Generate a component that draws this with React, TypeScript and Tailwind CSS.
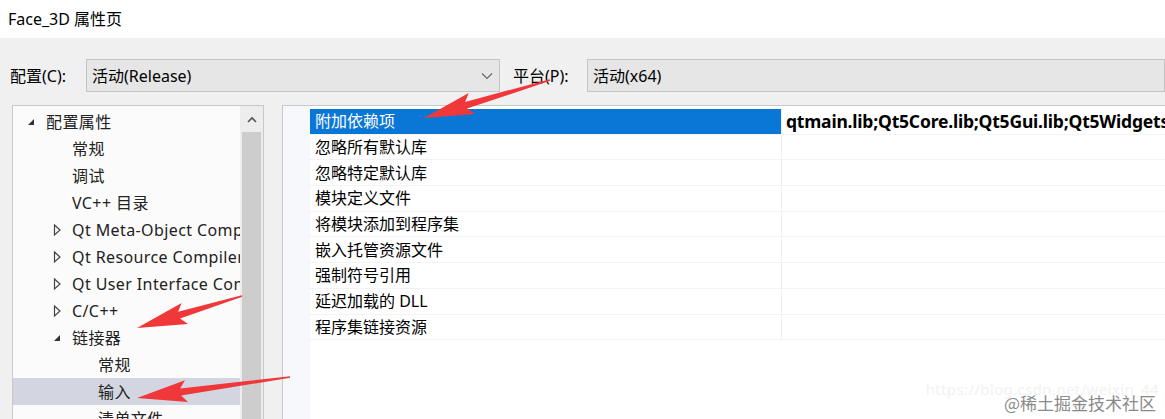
import React from 'react'

const font = { fontFamily: '"Noto Sans", "Noto Sans CJK SC", sans-serif' }

type TreeItem = { label: string; level: number; expander?: 'open' | 'closed'; selected?: boolean }

const tree: TreeItem[] = [
  { label: '配置属性', level: 0, expander: 'open' },
  { label: '常规', level: 1 },
  { label: '调试', level: 1 },
  { label: 'VC++ 目录', level: 1 },
  { label: 'Qt Meta-Object Compiler', level: 1, expander: 'closed' },
  { label: 'Qt Resource Compiler', level: 1, expander: 'closed' },
  { label: 'Qt User Interface Compiler', level: 1, expander: 'closed' },
  { label: 'C/C++', level: 1, expander: 'closed' },
  { label: '链接器', level: 1, expander: 'open' },
  { label: '常规', level: 2 },
  { label: '输入', level: 2, selected: true },
  { label: '清单文件', level: 2 },
]

const props = [
  '附加依赖项',
  '忽略所有默认库',
  '忽略特定默认库',
  '模块定义文件',
  '将模块添加到程序集',
  '嵌入托管资源文件',
  '强制符号引用',
  '延迟加载的 DLL',
  '程序集链接资源',
]

function Expander({ kind }: { kind?: 'open' | 'closed' }) {
  if (!kind) return <span className="w-[10px] shrink-0" />
  return kind === 'open' ? (
    <svg className="shrink-0" width="10" height="10" viewBox="0 0 10 10">
      <polygon points="8,2 8,8 2,8" fill="#333" />
    </svg>
  ) : (
    <svg className="shrink-0" width="10" height="14" viewBox="0 0 10 14">
      <polygon points="2.5,2 8,7 2.5,12" fill="none" stroke="#444" strokeWidth="1.2" />
    </svg>
  )
}

function arrow(x1: number, y1: number, x2: number, y2: number) {
  const dx = x2 - x1
  const dy = y2 - y1
  const len = Math.hypot(dx, dy)
  const ux = dx / len
  const uy = dy / len
  const nx = -uy
  const ny = ux
  const headLen = 44
  const bx = x2 - ux * headLen
  const by = y2 - uy * headLen
  const p = (x: number, y: number) => `${x.toFixed(1)},${y.toFixed(1)}`
  return [
    p(x1 + nx * 0.8, y1 + ny * 0.8),
    p(bx + nx * 3.5, by + ny * 3.5),
    p(bx - ux * 6 + nx * 11, by - uy * 6 + ny * 11),
    p(x2, y2),
    p(bx - ux * 6 - nx * 11, by - uy * 6 - ny * 11),
    p(bx - nx * 3.5, by - ny * 3.5),
    p(x1 - nx * 0.8, y1 - ny * 0.8),
  ].join(' ')
}

export default function App() {
  return (
    <div className="relative flex h-[419px] w-[1165px] flex-col overflow-hidden bg-[#f0f0f0] text-black" style={font}>
      <div className="flex h-[38px] shrink-0 items-center bg-white pl-[8px] text-[16px]">Face_3D 属性页</div>

      <div className="mt-[21px] flex h-[33px] shrink-0 items-center pl-[10px] text-[16px]">
        <span className="w-[76px]">配置(C):</span>
        <div className="flex h-[33px] w-[414px] items-center justify-between border border-[#c4c4c4] bg-[#e6e6e6] pl-[5px] pr-[6px]">
          <span>活动(Release)</span>
          <svg width="12" height="8" viewBox="0 0 12 8">
            <polyline points="1,1.5 6,6.5 11,1.5" fill="none" stroke="#666" strokeWidth="1.1" />
          </svg>
        </div>
        <span className="ml-[13px] w-[74px]">平台(P):</span>
        <div className="flex h-[33px] flex-1 items-center border border-[#c4c4c4] bg-[#e6e6e6] pl-[5px]">活动(x64)</div>
      </div>

      <div className="mt-[13px] flex flex-1 gap-[18px] pl-[12px]">
        <div className="flex w-[252px] border border-[#c8c8c8] bg-[#fbfbfb]">
          <div className="w-[227px] overflow-hidden pt-[2px] text-[16px] tracking-[0.4px] text-[#222]">
            {tree.map((t, i) => (
              <div
                key={i}
                className={`flex h-[27px] items-center whitespace-nowrap ${t.selected ? 'bg-[#d3d6e0]' : ''}`}
                style={{ paddingLeft: 13 + t.level * 26 }}
              >
                <Expander kind={t.expander} />
                <span className="ml-[10px] shrink-0">{t.label}</span>
              </div>
            ))}
          </div>
          <div className="flex w-[23px] flex-col bg-[#ededed]">
            <div className="flex h-[26px] items-center justify-center">
              <svg width="10" height="7" viewBox="0 0 10 7">
                <polyline points="1,6 5,2 9,6" fill="none" stroke="#555" strokeWidth="1.6" />
              </svg>
            </div>
            <div className="mx-[2px] flex-1 bg-[#cdcdcd]" />
          </div>
        </div>

        <div className="flex flex-1 border-l border-t border-[#c8c8c8] bg-white">
          <div className="w-[27px] bg-[#f6f8fb]" />
          <div className="flex-1 pt-[3px] text-[16px]">
            {props.map((p, i) => (
              <div key={i} className="flex h-[25.7px] border-b border-[#f3f3f3]">
                <div
                  className={`flex w-[471px] items-center pl-[5px] ${i === 0 ? 'bg-[#0a76d6] text-white' : ''}`}
                >
                  {p}
                </div>
                <div className="flex flex-1 items-center overflow-hidden whitespace-nowrap border-l border-[#f0f0f0] pl-[4px] text-[17.5px] font-bold tracking-[-0.2px]">
                  {i === 0 ? 'qtmain.lib;Qt5Core.lib;Qt5Gui.lib;Qt5Widgets.lib;%(AdditionalDependencies)' : ''}
                </div>
              </div>
            ))}
          </div>
        </div>
      </div>

      <svg className="pointer-events-none absolute left-0 top-0" width="1165" height="419">
        <polygon points={arrow(550, 80, 424, 118)} fill="#f0383a" />
        <polygon points={arrow(242, 296, 137, 328)} fill="#f0383a" />
        <polygon points={arrow(290, 377, 137, 398)} fill="#f0383a" />
      </svg>

      <div className="pointer-events-none absolute right-[6px] top-[378px] text-[15px] tracking-wide text-[#f2f2f2]">
        https://blog.csdn.net/weixin_44
      </div>
      <div
        className="pointer-events-none absolute right-[9px] top-[390px] text-[17px] text-[#8a8a8a]"
        style={{ fontFamily: '"Noto Sans CJK SC", sans-serif', textShadow: '0 0 2px #fff' }}
      >
        @稀土掘金技术社区
      </div>
    </div>
  )
}
